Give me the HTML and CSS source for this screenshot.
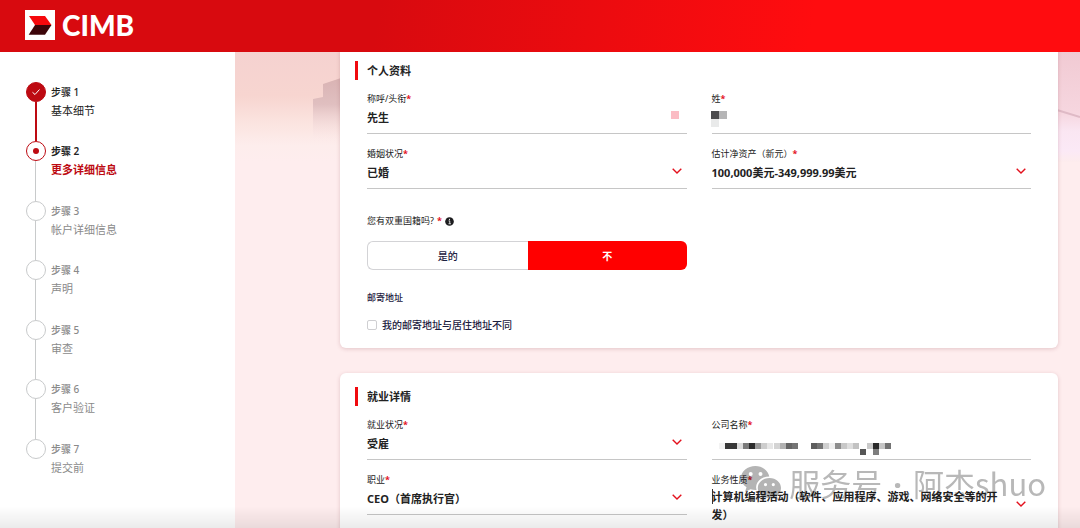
FILE: index.html
```html
<!DOCTYPE html>
<html lang="zh-CN">
<head>
    <meta charset="UTF-8">
    <meta name="viewport" content="width=device-width, initial-scale=1.0">
    <title>CIMB</title>
    <link rel="stylesheet" href="styles.css">
</head>
<body>
    <header class="header">
        <a class="logo" href="#">
            <svg class="logo-mark" viewBox="0 0 30 30" aria-hidden="true">
                <rect width="30" height="30" fill="#fff"/>
                <path d="M4 6H20L26.500 15H10Z" fill="#f5080c"/>
                <path d="M10 15H26.500L20 24.700H3.700Z" fill="#3c0509"/>
            </svg>
            <span class="logo-text">CIMB</span>
        </a>
    </header>

    <div class="layout">
        <nav class="sidebar">
            <ol class="steps">
                <li class="step done">
                    <div class="step-track">
                        <span class="step-dot">
                            <svg viewBox="0 0 20 20" aria-hidden="true"><path d="M6.500 10.300L9 12.500L13.500 7.500" fill="none" stroke="#fff" stroke-width="1"/></svg>
                        </span>
                        <span class="step-line"></span>
                    </div>
                    <div class="step-text">
                        <div class="step-no">步骤 1</div>
                        <div class="step-name">基本细节</div>
                    </div>
                </li>
                <li class="step current">
                    <div class="step-track">
                        <span class="step-dot"></span>
                        <span class="step-line"></span>
                    </div>
                    <div class="step-text">
                        <div class="step-no">步骤 2</div>
                        <div class="step-name">更多详细信息</div>
                    </div>
                </li>
                <li class="step">
                    <div class="step-track">
                        <span class="step-dot"></span>
                        <span class="step-line"></span>
                    </div>
                    <div class="step-text">
                        <div class="step-no">步骤 3</div>
                        <div class="step-name">帐户详细信息</div>
                    </div>
                </li>
                <li class="step">
                    <div class="step-track">
                        <span class="step-dot"></span>
                        <span class="step-line"></span>
                    </div>
                    <div class="step-text">
                        <div class="step-no">步骤 4</div>
                        <div class="step-name">声明</div>
                    </div>
                </li>
                <li class="step">
                    <div class="step-track">
                        <span class="step-dot"></span>
                        <span class="step-line"></span>
                    </div>
                    <div class="step-text">
                        <div class="step-no">步骤 5</div>
                        <div class="step-name">审查</div>
                    </div>
                </li>
                <li class="step">
                    <div class="step-track">
                        <span class="step-dot"></span>
                        <span class="step-line"></span>
                    </div>
                    <div class="step-text">
                        <div class="step-no">步骤 6</div>
                        <div class="step-name">客户验证</div>
                    </div>
                </li>
                <li class="step">
                    <div class="step-track">
                        <span class="step-dot"></span>
                    </div>
                    <div class="step-text">
                        <div class="step-no">步骤 7</div>
                        <div class="step-name">提交前</div>
                    </div>
                </li>
            </ol>
        </nav>

        <main class="content">
            <svg class="skyline" viewBox="0 0 845 110" preserveAspectRatio="none" aria-hidden="true">
                <defs>
                    <linearGradient id="sky" x1="0" y1="0" x2="0" y2="1">
                        <stop offset="0" stop-color="#f5d2d0"/>
                        <stop offset="0.4" stop-color="#f7d5d0"/>
                        <stop offset="0.65" stop-color="#fbe4e0"/>
                        <stop offset="0.85" stop-color="#fdedec"/>
                        <stop offset="1" stop-color="#feedee"/>
                    </linearGradient>
                    <linearGradient id="skyRight" x1="0" y1="0" x2="0" y2="1">
                        <stop offset="0" stop-color="#f1cad3"/>
                        <stop offset="0.55" stop-color="#f6d6df"/>
                        <stop offset="0.72" stop-color="#fae6f2"/>
                        <stop offset="0.9" stop-color="#fbe9f6"/>
                        <stop offset="1" stop-color="#fdeced"/>
                    </linearGradient>
                    <linearGradient id="tower" x1="0" y1="0" x2="0" y2="1">
                        <stop offset="0" stop-color="#d9b3b3"/>
                        <stop offset="0.4" stop-color="#e0bfc0"/>
                        <stop offset="1" stop-color="#feedee" stop-opacity="0"/>
                    </linearGradient>
                </defs>
                <rect width="500" height="110" fill="url(#sky)"/>
                <rect x="500" width="345" height="110" fill="url(#skyRight)"/>
                <path d="M78 47L88 45V32L106 26V92H78Z" fill="url(#tower)"/>
                <path d="M822 58L845 65" stroke="#dfbac6" stroke-width="2"/>
            </svg>

            <form class="form">
                <section class="card">
                    <h2 class="card-title">个人资料</h2>
                    <div class="fields">
                        <div class="field">
                            <label for="title">称呼/头衔<span class="required">*</span></label>
                            <div class="control">
                                <select id="title"><option>先生</option></select>
                                <svg class="pixel-chevron" viewBox="0 0 8 8" aria-hidden="true"><rect width="8" height="8" fill="#fbbcc4"/></svg>
                            </div>
                        </div>
                        <div class="field">
                            <label for="surname">姓<span class="required">*</span></label>
                            <div class="control">
                                <input id="surname" type="text">
                                <svg class="mosaic-name" viewBox="0 0 16 16" shape-rendering="crispEdges" aria-hidden="true">
                                    <rect width="8" height="8" fill="#4c4c4e"/>
                                    <rect x="8" width="8" height="8" fill="#b5b5b6"/>
                                    <rect y="8" width="8" height="8" fill="#e9eaea"/>
                                </svg>
                            </div>
                        </div>
                        <div class="field">
                            <label for="marital">婚姻状况<span class="required">*</span></label>
                            <div class="control">
                                <select id="marital"><option>已婚</option></select>
                                <svg class="chevron" viewBox="0 0 10 6" aria-hidden="true"><path d="M0.700 0.700L5 5L9.300 0.700"/></svg>
                            </div>
                        </div>
                        <div class="field">
                            <label for="networth">估计净资产（新元）<span class="required">*</span></label>
                            <div class="control">
                                <select id="networth"><option>100,000美元-349,999.99美元</option></select>
                                <svg class="chevron" viewBox="0 0 10 6" aria-hidden="true"><path d="M0.700 0.700L5 5L9.300 0.700"/></svg>
                            </div>
                        </div>
                    </div>

                    <div class="question" id="dual">
                        <span>您有双重国籍吗?</span>
                        <span class="required">*</span>
                        <svg class="info" viewBox="0 0 10 10" aria-hidden="true">
                            <circle cx="5" cy="5" r="4.800" fill="#1d1d1f"/>
                            <path d="M4 4.300H5.300V7.300M3.900 7.500H6.600" fill="none" stroke="#fff" stroke-width="0.900"/>
                            <circle cx="5" cy="2.600" r="0.700" fill="#fff"/>
                        </svg>
                    </div>
                    <div class="toggle" role="group" aria-labelledby="dual">
                        <button type="button" class="toggle-btn">是的</button>
                        <button type="button" class="toggle-btn active">不</button>
                    </div>

                    <h3 class="subtitle">邮寄地址</h3>
                    <div class="check">
                        <input type="checkbox" id="mailing">
                        <label for="mailing">我的邮寄地址与居住地址不同</label>
                    </div>
                </section>

                <section class="card">
                    <h2 class="card-title">就业详情</h2>
                    <div class="fields">
                        <div class="field">
                            <label for="employment">就业状况<span class="required">*</span></label>
                            <div class="control">
                                <select id="employment"><option>受雇</option></select>
                                <svg class="chevron" viewBox="0 0 10 6" aria-hidden="true"><path d="M0.700 0.700L5 5L9.300 0.700"/></svg>
                            </div>
                        </div>
                        <div class="field">
                            <label for="company">公司名称<span class="required">*</span></label>
                            <div class="control">
                                <input id="company" type="text">
                                <svg class="mosaic-company" viewBox="0 0 174 12" shape-rendering="crispEdges" aria-hidden="true">
                                    <rect x="0" width="6" height="6" fill="#f3f3f3"/>
                                    <rect x="6" width="12" height="6" fill="#383838"/>
                                    <rect x="18" width="6" height="6" fill="#dcdcdc"/>
                                    <rect x="24" width="6" height="6" fill="#7b7b7b"/>
                                    <rect x="30" width="6" height="6" fill="#2c2c2c"/>
                                    <rect x="36" width="6" height="6" fill="#9a9a9a"/>
                                    <rect x="42" width="6" height="6" fill="#cdcdcd"/>
                                    <rect x="48" width="6" height="6" fill="#e6e6e6"/>
                                    <rect x="55" width="6" height="6" fill="#d4d4d4"/>
                                    <rect x="61" width="6" height="6" fill="#b2b2b2"/>
                                    <rect x="67" width="6" height="6" fill="#666"/>
                                    <rect x="73" width="6" height="6" fill="#757575"/>
                                    <rect x="92" width="6" height="6" fill="#5e5e5e"/>
                                    <rect x="98" width="6" height="6" fill="#757575"/>
                                    <rect x="104" width="6" height="6" fill="#cfcfcf"/>
                                    <rect x="110" width="6" height="6" fill="#efefef"/>
                                    <rect x="116" width="6" height="6" fill="#8d8d8d"/>
                                    <rect x="122" width="6" height="6" fill="#c8c8c8"/>
                                    <rect x="128" width="6" height="6" fill="#dedede"/>
                                    <rect x="134" width="6" height="6" fill="#c2c2c2"/>
                                    <rect x="141" y="6" width="6" height="6" fill="#565656"/>
                                    <rect x="148" width="6" height="6" fill="#cacaca"/>
                                    <rect x="154" width="6" height="6" fill="#2a2a2a"/>
                                    <rect x="154" y="6" width="6" height="6" fill="#7e7e7e"/>
                                    <rect x="160" width="6" height="6" fill="#c6c6c6"/>
                                    <rect x="166" width="6" height="6" fill="#737373"/>
                                </svg>
                            </div>
                        </div>
                        <div class="field">
                            <label for="job">职业<span class="required">*</span></label>
                            <div class="control">
                                <select id="job"><option>CEO（首席执行官）</option></select>
                                <svg class="chevron" viewBox="0 0 10 6" aria-hidden="true"><path d="M0.700 0.700L5 5L9.300 0.700"/></svg>
                            </div>
                        </div>
                        <div class="field">
                            <label for="business">业务性质<span class="required">*</span></label>
                            <div class="control focused">
                                <textarea id="business" rows="2">计算机编程活动（软件、应用程序、游戏、网络安全等的开发）</textarea>
                                <svg class="chevron" viewBox="0 0 10 6" aria-hidden="true"><path d="M0.700 0.700L5 5L9.300 0.700"/></svg>
                            </div>
                        </div>
                    </div>
                </section>
            </form>
        </main>
    </div>

    <div class="bottom-shade"></div>

    <div class="watermark">
        <svg class="wechat" viewBox="0 0 40 36" aria-hidden="true">
            <path fill-rule="evenodd" d="M14.500 0C6.500 0 0 5.300 0 12C0 15.800 2.200 19.100 5.500 21.300L4 26L9.500 23.200C11.100 23.700 12.800 24 14.600 24C14.900 24 15.200 24 15.500 24C13.500 16.500 20 10.500 28.300 10.500C27 4.500 21.300 0 14.500 0ZM9.700 6A2 2 0 1 1 9.700 10A2 2 0 1 1 9.700 6ZM19.500 6A2 2 0 1 1 19.500 10A2 2 0 1 1 19.500 6Z"/>
            <path fill-rule="evenodd" d="M28.500 12C21.900 12 16.800 16.500 16.800 22C16.800 27.500 21.900 32 28.500 32C30 32 31.400 31.800 32.700 31.300L37.200 34L36 29.800C38.500 28 40 25.100 40 22C40 16.500 35 12 28.500 12ZM24.500 17A1.600 1.600 0 1 1 24.500 20.200A1.600 1.600 0 1 1 24.500 17ZM32.300 17A1.600 1.600 0 1 1 32.300 20.200A1.600 1.600 0 1 1 32.300 17Z"/>
        </svg>
        <span>服务号<span class="dot"> · </span>阿杰shuo</span>
    </div>
</body>
</html>
```
FILE: styles.css
```css
* {
    box-sizing: border-box;
    margin: 0;
    padding: 0;
}

body {
    display: flex;
    flex-direction: column;
    height: 100vh;
    overflow: hidden;
    font-family: "Noto Sans", "Noto Sans CJK SC", sans-serif;
    font-size: 11px;
    color: #222;
    background: #fff;
}

button,
input,
select,
textarea {
    font-family: inherit;
    color: inherit;
}

/* 顶部 */
.header {
    flex: none;
    display: flex;
    align-items: center;
    height: 52px;
    padding: 0 25px 2px;
    background: linear-gradient(100deg, #d80a0f 35%, #ff0c0f 75%);
    position: relative;
    z-index: 1;
}

.logo {
    display: flex;
    align-items: center;
    gap: 7px;
    color: #fff;
    text-decoration: none;
}

.logo-mark {
    width: 30px;
    height: 30px;
}

.logo-text {
    font-family: Lato, sans-serif;
    font-size: 28px;
    font-weight: 900;
    line-height: 30px;
}

.layout {
    flex: 1;
    display: flex;
    min-height: 0;
}

/* 步骤 */
.sidebar {
    flex: none;
    width: 235px;
    padding: 30px 25px;
    background: #fff;
}

.steps {
    display: flex;
    flex-direction: column;
    height: 100%;
    list-style: none;
}

.step {
    flex: 1;
    display: flex;
    gap: 5px;
    color: #8a8a8a;
}

.step-track {
    display: flex;
    flex-direction: column;
    align-items: center;
    width: 21px;
}

.step-dot {
    flex: none;
    display: flex;
    align-items: center;
    justify-content: center;
    width: 20px;
    height: 20px;
    border: 1px solid #c8cacb;
    border-radius: 50%;
}

.step-line {
    flex: 1;
    width: 1px;
    background: #c8cacb;
}

.step-no {
    font-size: 10px;
    font-weight: 500;
    line-height: 20px;
}

.step-name {
    font-size: 11px;
    line-height: 17px;
}

.step.done,
.step.current .step-no {
    color: #222;
}

.step.done .step-dot {
    border-color: #bd0a12;
    background: #bd0a12;
}

.step.done .step-dot svg {
    flex: none;
    width: 20px;
    height: 20px;
}

.step.done .step-line {
    width: 2px;
    background: #bd0a12;
}

.step.current .step-dot {
    border-color: #bd0a12;
}

.step.current .step-dot::after {
    content: "";
    width: 6px;
    height: 6px;
    border-radius: 50%;
    background: #bd0a12;
}

.step.current .step-no {
    font-weight: 600;
}

.step.current .step-name {
    font-weight: 700;
    color: #bd0a12;
}

/* 表单 */
.content {
    flex: 1;
    min-width: 0;
    overflow: hidden;
    position: relative;
    background: #feedee;
}

.skyline {
    position: absolute;
    top: 0;
    left: 0;
    width: 100%;
    height: 110px;
}

.form {
    display: flex;
    flex-direction: column;
    gap: 25px;
    margin-top: -5px;
    padding: 0 22px 25px 105px;
    position: relative;
}

.card {
    padding: 14px 27px 16px;
    border-radius: 6px;
    background: #fff;
    box-shadow: 0 1px 4px rgba(120, 40, 50, 0.2);
}

.card-title {
    margin: 0 0 13px -12px;
    padding-left: 9px;
    border-left: 3px solid #f00a0f;
    font-size: 11px;
    font-weight: 700;
    line-height: 19px;
}

.fields {
    display: grid;
    grid-template-columns: 1fr 1fr;
    gap: 14px 25px;
}

.field {
    min-width: 0;
}

.field label {
    display: block;
    font-size: 9px;
    line-height: 12px;
}

.required {
    color: #e3101c;
    font-weight: 700;
}

.control {
    display: grid;
    grid-template-columns: 1fr;
    align-items: center;
    border-bottom: 1px solid #c6c6c6;
}

.control > * {
    grid-area: 1 / 1;
}

.control select,
.control input {
    width: 100%;
    height: 28px;
    padding: 0 24px 4px 0;
    border: none;
    outline: none;
    background: none;
    appearance: none;
    font-size: 11px;
    font-weight: 700;
}

.control textarea {
    display: block;
    width: 100%;
    padding: 2px 25px 4px 0;
    border: none;
    outline: none;
    background: none;
    resize: none;
    overflow: hidden;
    font-size: 11px;
    font-weight: 700;
    line-height: 18px;
}

/* 输入光标 */
.control.focused::before {
    content: "";
    grid-area: 1 / 1;
    align-self: start;
    width: 1px;
    height: 15px;
    margin-top: 3px;
    background: #333;
}

.chevron {
    justify-self: end;
    width: 10px;
    height: 6px;
    margin: 0 5px 6px 0;
    fill: none;
    stroke: #e3101c;
    stroke-width: 1.4;
    pointer-events: none;
}

.pixel-chevron {
    justify-self: end;
    width: 8px;
    height: 8px;
    margin: 0 8px 8px 0;
    pointer-events: none;
}

.mosaic-name {
    width: 16px;
    height: 16px;
    margin-left: -1px;
    pointer-events: none;
}

.mosaic-company {
    width: 174px;
    height: 12px;
    margin: 8px 0 0 7px;
    pointer-events: none;
}

.question {
    display: flex;
    align-items: center;
    gap: 3px;
    margin-top: 26px;
    font-size: 9px;
    line-height: 12px;
}

.info {
    width: 9px;
    height: 9px;
}

.toggle {
    display: flex;
    width: calc(50% - 12px);
    height: 29px;
    margin-top: 14px;
}

.toggle-btn {
    flex: 1;
    border: 1px solid #d3d3d6;
    border-right: none;
    border-radius: 6px 0 0 6px;
    background: #fff;
    color: #1c2040;
    font-size: 10px;
    font-weight: 500;
}

.toggle-btn.active {
    border: none;
    border-radius: 0 6px 6px 0;
    background: #f00;
    color: #fff;
    font-weight: 700;
}

.subtitle {
    margin-top: 22px;
    color: #1c2040;
    font-size: 9px;
    font-weight: 500;
    line-height: 12px;
}

.check {
    display: flex;
    align-items: center;
    gap: 5px;
    margin-top: 14px;
    color: #1c2040;
    font-size: 10px;
    font-weight: 500;
    line-height: 14px;
}

.check input {
    width: 10px;
    height: 10px;
    border: 1px solid #cfcfd2;
    border-radius: 2px;
    background: #fff;
    appearance: none;
}

.check input:checked {
    background: #f00;
}

/* 浮层 */
.bottom-shade {
    position: fixed;
    right: 0;
    bottom: 0;
    left: 0;
    height: 22px;
    background: linear-gradient(rgba(0, 0, 0, 0), rgba(0, 0, 0, 0.08));
    pointer-events: none;
}

.watermark {
    position: fixed;
    right: 34px;
    bottom: 24px;
    display: flex;
    align-items: center;
    gap: 8px;
    color: #b8b8b8;
    font-family: "Noto Sans CJK SC", sans-serif;
    font-size: 31px;
    font-weight: 400;
    line-height: 40px;
    mix-blend-mode: multiply;
    pointer-events: none;
}

.watermark .dot {
    padding: 0 3px;
    font-family: "Noto Sans", sans-serif;
    font-weight: 700;
}

.wechat {
    width: 40px;
    height: 36px;
    fill: #b4b4b4;
}
```
